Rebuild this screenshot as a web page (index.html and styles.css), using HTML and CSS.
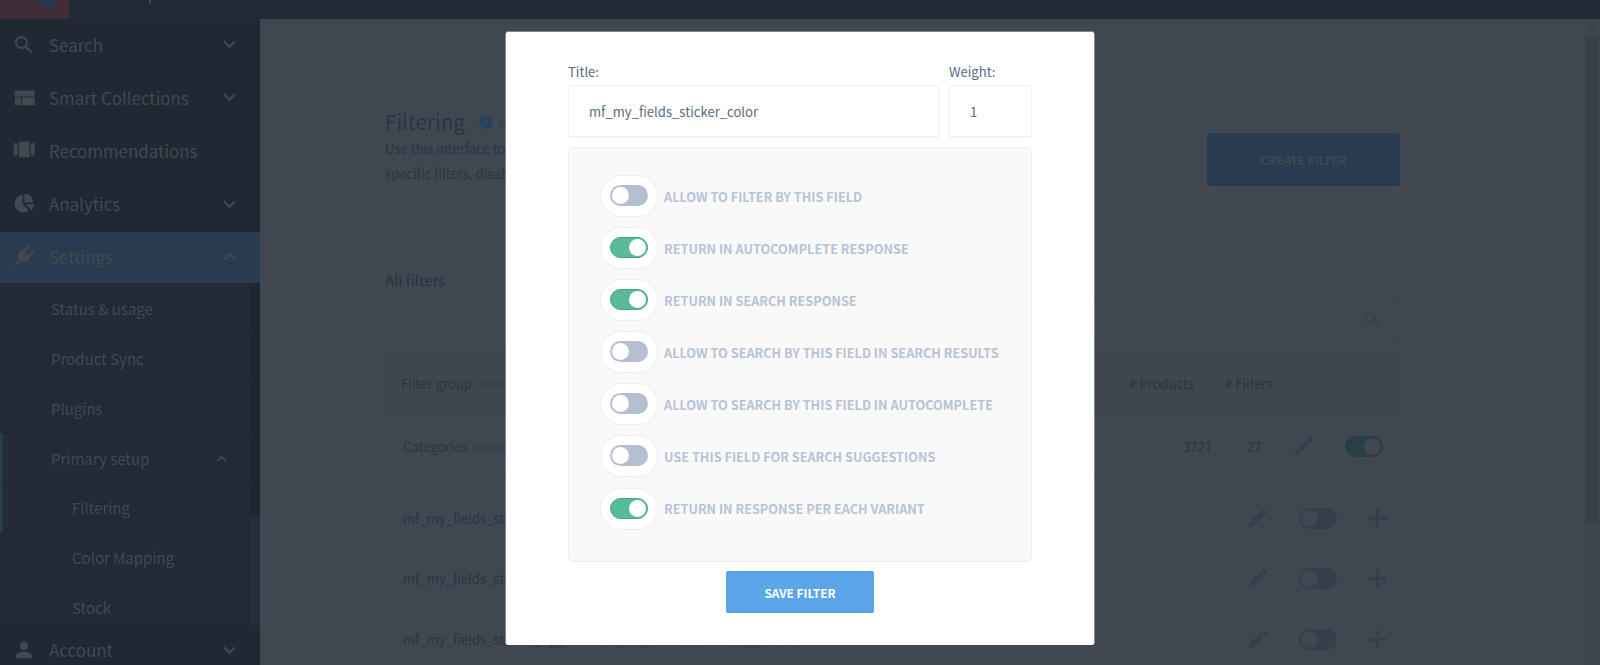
FILE: index.html
```html
<!DOCTYPE html>
<html lang="en">
<head>
    <meta charset="UTF-8">
    <meta name="viewport" content="width=device-width, initial-scale=1.0">
    <title>Filtering</title>
    <link rel="stylesheet" href="styles.css">
</head>
<body>
    <!-- Shared icons -->
    <svg class="sprite" width="0" height="0">
        <symbol id="i-search" viewBox="0 0 24 24"><path d="M15.5 14h-.79l-.28-.27A6.47 6.47 0 0 0 16 9.5 6.5 6.5 0 1 0 9.5 16c1.61 0 3.09-.59 4.23-1.57l.27.28v.79l5 4.99L20.49 19l-4.99-5zm-6 0C7.01 14 5 11.99 5 9.5S7.01 5 9.5 5 14 7.01 14 9.5 11.99 14 9.5 14z"/></symbol>
        <symbol id="i-down" viewBox="0 0 12 8"><path d="M1 1l5 5 5-5" fill="none" stroke="currentColor" stroke-width="2"/></symbol>
        <symbol id="i-up" viewBox="0 0 12 8"><path d="M1 7l5-5 5 5" fill="none" stroke="currentColor" stroke-width="2"/></symbol>
        <symbol id="i-pencil" viewBox="0 0 19 19"><path d="M12.2 3.4l3.4 3.4L6 16.2 1.2 18.4c-.7.3-1.1-.1-.8-.8l2.2-4.8zM13.1 2.5l1.7-1.8c.6-.6 1.4-.6 2 0l1.5 1.5c.6.6.6 1.4 0 2l-1.8 1.7z"/></symbol>
        <symbol id="i-move" viewBox="0 0 19 19"><path d="M9.5 0l3.3 3.7h-2v4.5h4.5v-2L19 9.5l-3.7 3.3v-2h-4.5v4.5h2L9.5 19l-3.3-3.7h2v-4.5H3.7v2L0 9.5l3.7-3.3v2h4.5V3.7h-2z"/></symbol>
    </svg>

    <!-- Top Bar -->
    <header class="topbar">
        <div class="logo">
            <svg width="69" height="19" viewBox="0 0 69 19"><path d="M35 0h20v10C47 8.5 40 5 35 0z" fill="#263850"/></svg>
        </div>
        <div class="topbar-mark"></div>
    </header>

    <div class="layout">
        <!-- Sidebar -->
        <nav class="sidebar">
            <a class="nav-item"><svg class="nav-icon"><use href="#i-search"/></svg><span>Search</span><svg class="chevron"><use href="#i-down"/></svg></a>
            <a class="nav-item"><svg class="nav-icon" viewBox="0 0 24 24"><path d="M2.7 4.4h20v6.2h-20zM2.7 11.6H9v7.7H2.7zM10 11.6h12.7v7.7H10z"/></svg><span>Smart Collections</span><svg class="chevron"><use href="#i-down"/></svg></a>
            <a class="nav-item"><svg class="nav-icon" viewBox="0 0 24 24"><path d="M7 2.6h10.5v15.7H7zM1.6 4.2h4.2v12.3H1.6zM18.7 4.2h4v12.3h-4z"/></svg><span>Recommendations</span></a>
            <a class="nav-item"><svg class="nav-icon" viewBox="-70 -50 660 660"><path d="M527.79 288H290.5l158.03 158.03c6.04 6.04 15.98 6.53 22.19.68 38.7-36.46 65.32-85.61 73.13-140.86 1.34-9.46-6.51-17.85-16.06-17.85zm-15.83-64.8C503.72 103.74 408.26 8.28 288.8.04 279.68-.59 272 7.1 272 16.24V240h223.77c9.14 0 16.82-7.68 16.19-16.8zM224 288V50.71c0-9.55-8.39-17.4-17.84-16.06C86.99 51.49-4.1 155.6.14 280.37 4.5 408.51 114.83 513.59 243.03 511.98c50.4-.63 96.97-16.87 135.26-44.03 7.9-5.6 8.42-17.23 1.57-24.08L224 288z"/></svg><span>Analytics</span><svg class="chevron"><use href="#i-down"/></svg></a>
            <a class="nav-item active"><svg class="nav-icon" viewBox="0 0 24 24"><g transform="rotate(45 12 12)"><path d="M6 8.5h12v3.5a6 6 0 0 1-4.7 5.8V25h-2.6v-7.2A6 6 0 0 1 6 12z"/><path d="M8.8 9V3M15.2 9V3" stroke="currentColor" stroke-width="2.6" stroke-linecap="round"/></g></svg><span>Settings</span><svg class="chevron"><use href="#i-up"/></svg></a>

            <div class="submenu">
                <div class="submenu-list">
                    <a class="sub-item">Status &amp; usage</a>
                    <a class="sub-item">Product Sync</a>
                    <a class="sub-item">Plugins</a>
                    <a class="sub-item current"><span>Primary setup</span><svg class="chevron small"><use href="#i-up"/></svg></a>
                    <a class="sub-item nested current">Filtering</a>
                    <a class="sub-item nested">Color Mapping</a>
                    <a class="sub-item nested">Stock</a>
                </div>
                <div class="submenu-scroll"><div class="submenu-thumb"></div></div>
            </div>

            <a class="nav-item"><svg class="nav-icon" viewBox="0 0 24 24"><circle cx="12" cy="8" r="4.3"/><path d="M3.7 20.3v-2.2c0-3 5-4.4 8.3-4.4s8.3 1.4 8.3 4.4v2.2z"/></svg><span>Account</span><svg class="chevron"><use href="#i-down"/></svg></a>
        </nav>

        <!-- Page Content -->
        <main class="content">
            <div class="page-head">
                <div class="page-intro">
                    <h1><span>Filtering</span><svg class="play" viewBox="0 0 14 14"><circle cx="7" cy="7" r="7" fill="#27415d"/><path d="M5.3 4l4.2 3-4.2 3z" fill="#404750"/></svg><small>Watch video</small></h1>
                    <p>Use this interface to manage filters, rename<br>specific filters, disable and reorder them.</p>
                    <div class="divider"></div>
                </div>
                <button class="create-btn">CREATE FILTER</button>
            </div>

            <h2>All filters</h2>
            <div class="search-box"><svg><use href="#i-search"/></svg></div>

            <div class="table-row table-head">
                <div class="name">Filter group <i>(Internal name)</i></div>
                <div class="col-products">#&nbsp;Products</div>
                <div class="col-filters">#&nbsp;Filters</div>
            </div>
            <div class="table-row group">
                <div class="name">Categories <i>(categories)</i></div>
                <div class="count-products">3727</div>
                <div class="count-filters">27</div>
                <svg class="pencil"><use href="#i-pencil"/></svg>
                <div class="toggle dim on"></div>
            </div>
            <div class="fields">
                <div class="table-row field">
                    <div class="name">mf_my_fields_sticker_text</div>
                    <svg class="pencil"><use href="#i-pencil"/></svg>
                    <div class="toggle dim"></div>
                    <svg class="move"><use href="#i-move"/></svg>
                </div>
                <div class="table-row field">
                    <div class="name">mf_my_fields_sticker_color</div>
                    <svg class="pencil"><use href="#i-pencil"/></svg>
                    <div class="toggle dim"></div>
                    <svg class="move"><use href="#i-move"/></svg>
                </div>
                <div class="table-row field">
                    <div class="name">mf_my_fields_sticker_bg_color <i>(mf_my_fields_sticker_bg_color)</i></div>
                    <svg class="pencil"><use href="#i-pencil"/></svg>
                    <div class="toggle dim"></div>
                    <svg class="move"><use href="#i-move"/></svg>
                </div>
            </div>
        </main>

        <div class="page-scroll">
            <div class="scroll-arrow"></div>
            <div class="scroll-thumb"></div>
        </div>
    </div>

    <!-- Edit Filter Modal -->
    <div class="overlay">
        <form class="modal">
            <div class="fields-row">
                <label class="field-title">Title:<input type="text" value="mf_my_fields_sticker_color"></label>
                <label class="field-weight">Weight:<input type="text" value="1"></label>
            </div>
            <div class="options">
                <div class="option"><div class="pill"><div class="toggle"></div></div><span>ALLOW TO FILTER BY THIS FIELD</span></div>
                <div class="option"><div class="pill"><div class="toggle on"></div></div><span>RETURN IN AUTOCOMPLETE RESPONSE</span></div>
                <div class="option"><div class="pill"><div class="toggle on"></div></div><span>RETURN IN SEARCH RESPONSE</span></div>
                <div class="option"><div class="pill"><div class="toggle"></div></div><span>ALLOW TO SEARCH BY THIS FIELD IN SEARCH RESULTS</span></div>
                <div class="option"><div class="pill"><div class="toggle"></div></div><span>ALLOW TO SEARCH BY THIS FIELD IN AUTOCOMPLETE</span></div>
                <div class="option"><div class="pill"><div class="toggle"></div></div><span>USE THIS FIELD FOR SEARCH SUGGESTIONS</span></div>
                <div class="option"><div class="pill"><div class="toggle on"></div></div><span>RETURN IN RESPONSE PER EACH VARIANT</span></div>
            </div>
            <button type="button" class="save-btn">SAVE FILTER</button>
        </form>
    </div>
</body>
</html>
```
FILE: styles.css
```css
/* Global Styles */
* {
    box-sizing: border-box;
}

body {
    font-family: "Noto Sans CJK SC", "Noto Sans", sans-serif;
    margin: 0;
    height: 665px;
    overflow: hidden;
    background-color: #404750;
    color: #2a3442;
    font-size: 14px;
}

svg {
    fill: currentColor;
    flex: none;
}

button,
input {
    font-family: inherit;
}

.sprite {
    position: absolute;
}

/* Top Bar */
.topbar {
    display: flex;
    height: 19px;
    background-color: #232a37;
}

.logo {
    width: 69px;
    height: 19px;
    background-color: #3f2c38;
}

.topbar-mark {
    width: 2px;
    height: 3px;
    margin-left: 80px;
    background-color: #414852;
}

.layout {
    display: flex;
    height: 646px;
    overflow: hidden;
}

/* Sidebar */
.sidebar {
    width: 260px;
    flex: none;
    background-color: #202833;
    color: #414852;
}

.nav-item {
    display: flex;
    align-items: center;
    height: 53.2px;
    padding: 0 24px 2px 12px;
    font-size: 16.9px;
}

.nav-item span {
    margin-bottom: 1px;
}

.nav-item.active {
    height: 51px;
    background-color: #283b4f;
}

.nav-item.active span {
    margin-bottom: 0;
}

.nav-icon {
    width: 24px;
    height: 24px;
    margin-right: 13px;
}

.chevron {
    width: 13px;
    height: 9px;
    margin-left: auto;
}

.chevron.small {
    width: 11px;
    height: 7px;
    margin-right: 23px;
}

.submenu {
    display: flex;
    height: 342px;
    overflow: hidden;
    background-color: #232a37;
}

.submenu-list {
    width: 250px;
    padding-top: 1px;
}

.sub-item {
    display: flex;
    align-items: center;
    height: 49.8px;
    padding: 1px 0 0 51px;
    border-bottom: 1px solid #202733;
    font-size: 15px;
}

.sub-item.nested {
    padding-left: 72px;
}

.sub-item.current {
    border-left: 3px solid #283b4f;
    padding-left: 48px;
}

.sub-item.nested.current {
    padding-left: 69px;
}

.submenu-scroll {
    display: flex;
    align-items: flex-end;
    width: 10px;
    background-color: #202631;
}

.submenu-thumb {
    width: 10px;
    height: 108px;
    background-color: #242e3f;
}

/* Page Content */
.content {
    width: 1015px;
    flex: none;
    margin-left: 125px;
}

.page-head {
    display: flex;
    justify-content: space-between;
    height: 178px;
    padding-top: 83px;
}

h1 {
    display: flex;
    align-items: center;
    height: 40px;
    margin: 0;
    font-size: 20.7px;
    font-weight: 400;
}

h1 span {
    margin-bottom: 3px;
}

.play {
    width: 14px;
    height: 14px;
    margin: 0 5px 0 14px;
}

h1 small {
    font-size: 10px;
    color: #353d49;
}

.page-intro p {
    margin: -6px 0 0;
    font-size: 13.1px;
    line-height: 25px;
    white-space: nowrap;
}

.divider {
    width: 30px;
    height: 1px;
    margin-top: 9px;
    background-color: #3d444e;
}

.create-btn {
    width: 193px;
    height: 53px;
    margin-top: 31px;
    border: none;
    border-radius: 2px;
    background-color: #283b50;
    color: #404750;
    font-size: 11.9px;
    font-weight: 700;
}

h2 {
    height: 24px;
    margin: 71px 0 7px;
    font-size: 14.9px;
    font-weight: 400;
    line-height: 24px;
}

.search-box {
    display: flex;
    align-items: center;
    justify-content: flex-end;
    width: 800px;
    height: 42px;
    margin-left: auto;
    padding: 0 16px 2px 0;
    border: 1px solid #3d444f;
    color: #373f4b;
}

.search-box svg {
    width: 21px;
    height: 21px;
}

.table-row {
    display: flex;
    align-items: center;
    font-size: 13.1px;
}

.table-row i {
    color: #353d4a;
}

.name {
    flex: 1;
    white-space: nowrap;
}

.table-head {
    height: 65px;
    margin-top: 10px;
    padding-left: 15px;
    border: 1px solid #3d444e;
    border-radius: 2px;
    background-color: #3f464f;
}

.col-products {
    width: 96px;
}

.col-filters {
    width: 174px;
}

.group {
    height: 62px;
    padding: 0 17px 0 18px;
    border-bottom: 1px solid #3d444f;
}

.count-products {
    width: 64px;
}

.count-filters {
    width: 47px;
}

.group .pencil {
    margin-right: 32px;
}

.fields {
    padding-top: 10px;
}

.field {
    height: 60.5px;
    padding: 0 13px 0 18px;
}

.pencil,
.move {
    width: 19px;
    height: 19px;
    color: #363d4b;
}

.field .pencil {
    margin-right: 32px;
}

.field .toggle {
    margin-right: 31px;
}

/* Scrollbar */
.page-scroll {
    width: 15px;
    margin-left: auto;
    background-color: #3f454f;
}

.scroll-arrow {
    width: 8px;
    height: 4px;
    margin: 8px 0 6px 3px;
    background-color: #343b45;
    clip-path: polygon(50% 0, 100% 100%, 0 100%);
}

.scroll-thumb {
    width: 14px;
    height: 486px;
    background-color: #373e48;
}

/* Toggle */
.toggle {
    width: 38px;
    height: 21px;
    padding: 2px;
    border-radius: 11px;
    background-color: #b4bfd1;
}

.toggle::before {
    content: "";
    display: block;
    width: 17px;
    height: 17px;
    border-radius: 50%;
    background-color: #fff;
}

.toggle.on {
    padding: 1px;
    border: 1px solid #41a385;
    background-color: #5abb9c;
}

.toggle.on::before {
    margin-left: auto;
}

.toggle.dim {
    background-color: #363d4b;
}

.toggle.dim.on {
    border-color: #243e43;
    background-color: #283f45;
}

.toggle.dim::before {
    background-color: #404750;
}

/* Modal */
.overlay {
    position: absolute;
    inset: 0;
    padding-top: 32px;
}

.modal {
    width: 588px;
    height: 613px;
    margin: 0 auto;
    padding: 27px 62px 0;
    border-radius: 2px;
    background-color: #fff;
    box-shadow: 0 0 0 1px #7d848f;
    clip-path: inset(-1px -1px 0 -1px round 3px);
    color: #5b6b80;
}

.fields-row {
    display: flex;
    gap: 10px;
}

.fields-row label {
    display: block;
    font-size: 13.1px;
    line-height: 26px;
}

.fields-row input {
    display: block;
    width: 100%;
    height: 53px;
    padding: 0 20px;
    border: 1px solid #eeeff5;
    border-bottom: 2px solid #f1f2f7;
    border-radius: 4px;
    outline: none;
    color: #5b6b80;
    font-size: 13.1px;
}

.field-title {
    width: 371px;
}

.field-weight {
    width: 83px;
}

.options {
    height: 415px;
    margin-top: 9px;
    padding: 27px 31px;
    border: 1px solid #eaecf3;
    border-radius: 5px;
    background-color: #f9f9f9;
}

.option {
    display: flex;
    align-items: center;
    height: 42px;
    margin-bottom: 10.1px;
    color: #b8c3d6;
    font-size: 12.7px;
    font-weight: 700;
    white-space: nowrap;
}

.pill {
    display: flex;
    flex: none;
    align-items: center;
    justify-content: center;
    width: 58px;
    height: 42px;
    margin-right: 6px;
    padding-bottom: 1px;
    border: 1px solid #eceef5;
    border-radius: 21px;
    background-color: #fff;
}

.save-btn {
    display: block;
    width: 148px;
    height: 42px;
    margin: 9px auto 0;
    border: 1px solid #539fe8;
    border-radius: 2px;
    background-color: #5ca5eb;
    color: #fff;
    font-size: 11.9px;
    font-weight: 700;
}
```
